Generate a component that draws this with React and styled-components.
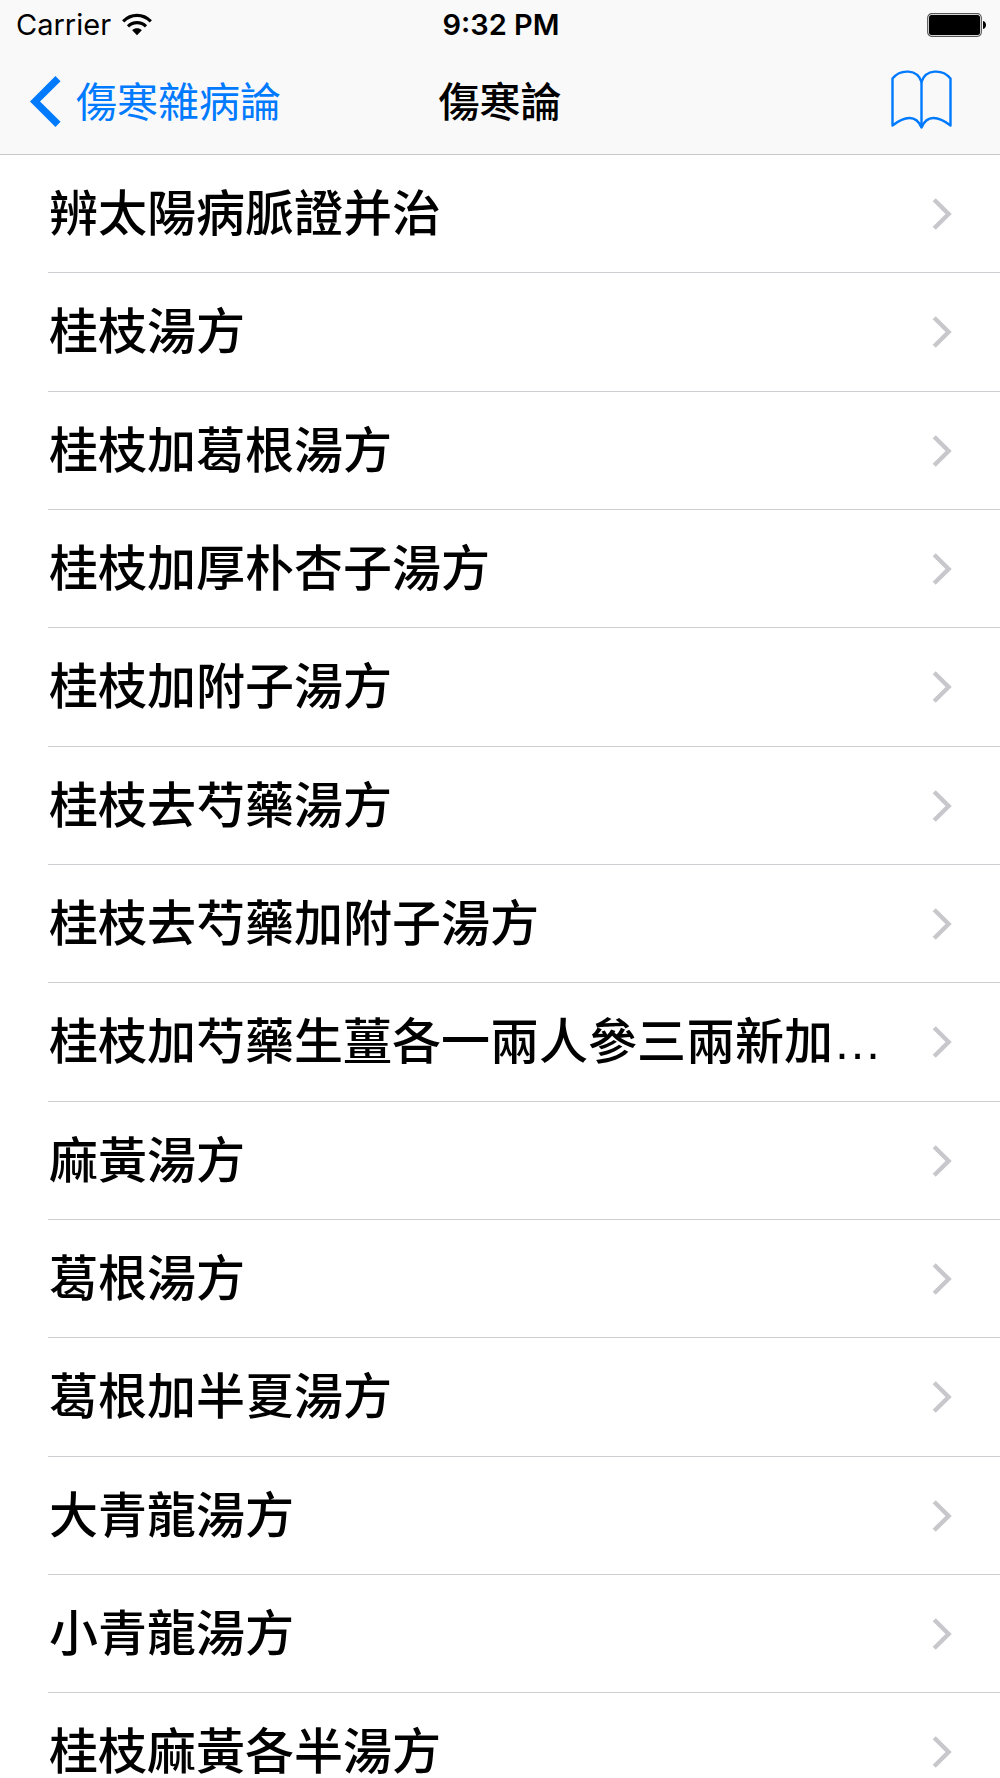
import React from 'react';
import styled, { createGlobalStyle } from 'styled-components';

const GlobalStyle = createGlobalStyle`
  * {
    box-sizing: border-box;
  }

  body {
    margin: 0;
    background-color: #ffffff;
    color: #000000;
    font-family: Inter, "Noto Sans CJK TC", sans-serif;
  }
`;

const Header = styled.header`
  background-color: #f9f9f9;
  border-bottom: 1px solid #c8c8c8;
`;

const StatusBar = styled.div`
  display: grid;
  grid-template-columns: 1fr auto 1fr;
  align-items: center;
  height: 50px;
  padding: 0 14px 0 16px;
  font-size: 29px;
  line-height: 50px;
`;

const StatusGroup = styled.div`
  display: flex;
  align-items: center;
  justify-content: ${props => props.$align || 'flex-start'};
  gap: 11px;
`;

const Clock = styled.time`
  font-weight: 600;
`;

const NavBar = styled.nav`
  display: grid;
  grid-template-columns: 1fr auto 1fr;
  align-items: center;
  height: 104px;
  padding: 0 30px;
`;

const BackLink = styled.a`
  display: flex;
  align-items: center;
  gap: 15px;
  color: #007aff;
  font-size: 41px;
  line-height: 60px;
  text-decoration: none;
  white-space: nowrap;
`;

const Title = styled.h1`
  margin: 0;
  font-size: 41px;
  line-height: 60px;
  font-weight: 500;
`;

const BookButton = styled.button`
  display: flex;
  justify-self: end;
  padding: 0 18px;
  border: none;
  background: none;
  color: #007aff;
  cursor: pointer;
`;

const ChapterList = styled.ul`
  margin: 0;
  padding: 0 0 0 48px;
  list-style-type: none;
`;

const ChapterItem = styled.li`
  height: 118px;
  border-bottom: 1px solid #cfced2;

  &:nth-child(3n + 2) {
    height: 119px;
  }
`;

const ChapterLink = styled.a`
  display: flex;
  align-items: center;
  justify-content: space-between;
  gap: 48px;
  height: 100%;
  padding: 0 48px 0 1px;
  color: inherit;
  text-decoration: none;
`;

const ChapterName = styled.span`
  overflow: hidden;
  font-family: "Liberation Sans", "Noto Sans CJK TC", sans-serif;
  font-size: 49px;
  line-height: 72px;
  font-weight: 500;
  text-overflow: ellipsis;
  white-space: nowrap;
`;

const Icon = styled.svg`
  display: block;
  flex-shrink: 0;
`;

const chapters = [
  '辨太陽病脈證并治',
  '桂枝湯方',
  '桂枝加葛根湯方',
  '桂枝加厚朴杏子湯方',
  '桂枝加附子湯方',
  '桂枝去芍藥湯方',
  '桂枝去芍藥加附子湯方',
  '桂枝加芍藥生薑各一兩人參三兩新加湯方',
  '麻黃湯方',
  '葛根湯方',
  '葛根加半夏湯方',
  '大青龍湯方',
  '小青龍湯方',
  '桂枝麻黃各半湯方'
];

const WifiIcon = () => (
  <Icon width="30" height="24" viewBox="0 0 30 24" fill="none" stroke="#000000" strokeWidth="3.2">
    <path d="M1.2 8.4C9.2.4 20.8.4 28.8 8.4" />
    <path d="M6 13.4c5.2-5 12.8-5 18 0" />
    <path d="M15 22.2l-4.8-5c2.7-2.6 6.9-2.6 9.6 0z" fill="#000000" stroke="none" />
  </Icon>
);

const BatteryIcon = () => (
  <Icon width="59" height="24" viewBox="0 0 59 24">
    <rect x="0.7" y="0.7" width="53.6" height="22.6" rx="4" fill="#ffffff" stroke="#555555" strokeWidth="1.2" />
    <rect x="2" y="2" width="51" height="20" rx="2.5" fill="#000000" />
    <path d="M56 8c4 1 4 7 0 8z" fill="#000000" />
  </Icon>
);

const BackIcon = () => (
  <Icon width="31" height="52" viewBox="0 0 31 52" fill="none" stroke="currentColor" strokeWidth="7.2">
    <path d="M28 2.6L5 25.5 28 48.4" />
  </Icon>
);

const BookIcon = () => (
  <Icon width="61" height="64" viewBox="0 0 61 64" fill="none" stroke="currentColor" strokeWidth="2.4" strokeLinejoin="round">
    <path d="M30.5 12C26.5-1.2 9.5-1.2 1.5 8.5V55.5C14 46 25 44.5 30.5 57.5C36 44.5 47 46 59.5 55.5V8.5C51.5-1.2 34.5-1.2 30.5 12z" />
    <path d="M30.5 12V57.5" />
  </Icon>
);

const ChevronIcon = () => (
  <Icon width="20" height="32" viewBox="0 0 20 32" fill="none" stroke="#c7c7cc" strokeWidth="4.4">
    <path d="M2.2 1.8L16.6 16 2.2 30.2" />
  </Icon>
);

const App = () => {
  return (
    <>
      <GlobalStyle />
      <Header>
        <StatusBar>
          <StatusGroup>
            <span>Carrier</span>
            <WifiIcon />
          </StatusGroup>
          <Clock>9:32 PM</Clock>
          <StatusGroup $align="flex-end">
            <BatteryIcon />
          </StatusGroup>
        </StatusBar>
        <NavBar>
          <BackLink href="#books">
            <BackIcon />
            傷寒雜病論
          </BackLink>
          <Title>傷寒論</Title>
          <BookButton type="button" aria-label="書">
            <BookIcon />
          </BookButton>
        </NavBar>
      </Header>
      <main>
        <ChapterList>
          {chapters.map((chapter, index) => (
            <ChapterItem key={chapter}>
              <ChapterLink href={`#chapter-${index + 1}`}>
                <ChapterName>{chapter}</ChapterName>
                <ChevronIcon />
              </ChapterLink>
            </ChapterItem>
          ))}
        </ChapterList>
      </main>
    </>
  );
};

export default App;
